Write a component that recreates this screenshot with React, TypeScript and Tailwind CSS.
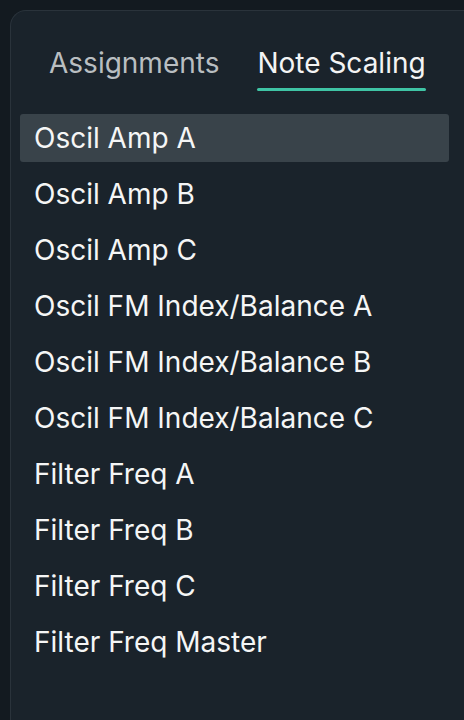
const items = [
  'Oscil Amp A',
  'Oscil Amp B',
  'Oscil Amp C',
  'Oscil FM Index/Balance A',
  'Oscil FM Index/Balance B',
  'Oscil FM Index/Balance C',
  'Filter Freq A',
  'Filter Freq B',
  'Filter Freq C',
  'Filter Freq Master',
]

export default function App() {
  return (
    <div
      className="w-[464px] h-[720px] overflow-hidden bg-[#131a20] pl-[10px] pt-[10px]"
      style={{ fontFamily: 'Inter, "Noto Sans", sans-serif' }}
    >
      <div className="h-[740px] w-[480px] rounded-tl-[16px] border-l border-t border-[#2a333b] bg-[#1a232b]">
        {/* Tabs */}
        <div className="flex gap-[38px] pl-[38px] pt-[32px]">
          <div className="text-[28px] leading-[40px] text-[#b9bec1]">Assignments</div>
          <div className="flex flex-col">
            <div className="text-[28px] leading-[40px] text-[#f3f4f4]">Note Scaling</div>
            <div className="mt-[5px] h-[3px] rounded-full bg-[#3fc4a5]" />
          </div>
        </div>

        {/* List */}
        <div className="mt-[23px] flex flex-col pl-[9px] w-[438px]">
          {items.map((item, i) => (
            <div
              key={item}
              className={
                i === 0
                  ? 'h-[48px] mb-[8px] flex items-center rounded-[3px] bg-[#39434a] pl-[14px] text-[28px] text-[#f5f6f6]'
                  : 'h-[48px] mb-[8px] flex items-center pl-[14px] text-[28px] text-[#f5f6f6]'
              }
            >
              {item}
            </div>
          ))}
        </div>
      </div>
    </div>
  )
}
